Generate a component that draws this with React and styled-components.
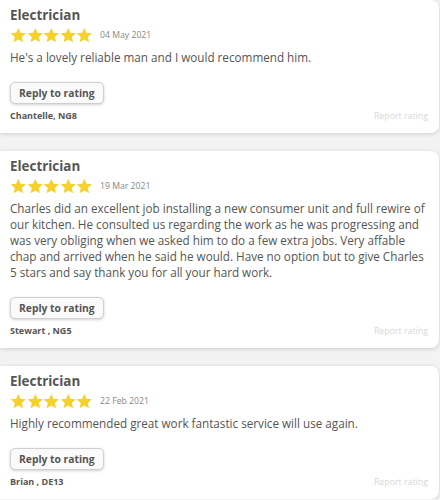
import React from 'react'
import styled, { createGlobalStyle } from 'styled-components'

const GlobalStyle = createGlobalStyle`
  body {
    margin: 0;
    background: #f3f3f3;
    font-family: "Open Sans", "Liberation Sans", sans-serif;
  }
`

const RatingList = styled.div`
  display: flex;
  flex-direction: column;
  gap: 18px;
  width: 439px;
`

const Card = styled.div`
  background: #ffffff;
  border-radius: 0 8px 8px 0;
  box-shadow: 0 1px 4px rgba(0, 0, 0, 0.16);
  padding: 7px 11px 10px 10px;
  display: flex;
  flex-direction: column;
`

const Title = styled.div`
  font-size: 13.4px;
  font-weight: 700;
  color: #555;
  line-height: 16px;
`

const StarRow = styled.div`
  display: flex;
  align-items: center;
  margin-top: 2px;
  height: 20px;
`

const Stars = styled.div`
  display: flex;
`

const DateText = styled.span`
  font-size: 8.7px;
  color: #888;
  margin-left: 7px;
`

const Body = styled.p`
  margin: 4px 0 0;
  font-size: 11.7px;
  line-height: 16px;
  color: #555;
`

const ReplyButton = styled.button`
  align-self: flex-start;
  margin-top: 17px;
  height: 22px;
  padding: 0 8px;
  font-family: inherit;
  font-size: 10.3px;
  font-weight: 700;
  color: #555;
  background: #fafafa;
  border: 1px solid #cfcfcf;
  border-radius: 5px;
  box-shadow: 0 1px 3px rgba(0, 0, 0, 0.18);
  cursor: pointer;
`

const Footer = styled.div`
  display: flex;
  justify-content: space-between;
  align-items: center;
  margin-top: 5px;
  line-height: 14px;
`

const Author = styled.span`
  font-size: 9px;
  font-weight: 700;
  color: #555;
`

const Report = styled.span`
  font-size: 8.8px;
  color: #d8d8d8;
`

const Star = () => (
  <svg width="16.6" height="17" viewBox="0 0 24 24">
    <path
      d="M12 1l3.2 7.1 7.8.8-5.9 5.2 1.7 7.7L12 17.8l-6.8 4 1.7-7.7L1 8.9l7.8-.8z"
      fill="#f5d12c"
    />
  </svg>
)

const ratings = [
  {
    date: '04 May 2021',
    text: "He's a lovely reliable man and I would recommend him.",
    author: 'Chantelle, NG8',
  },
  {
    date: '19 Mar 2021',
    text:
      'Charles did an excellent job installing a new consumer unit and full rewire of our kitchen. He consulted us regarding the work as he was progressing and was very obliging when we asked him to do a few extra jobs. Very affable chap and arrived when he said he would. Have no option but to give Charles 5 stars and say thank you for all your hard work.',
    author: 'Stewart , NG5',
  },
  {
    date: '22 Feb 2021',
    text: 'Highly recommended great work fantastic service will use again.',
    author: 'Brian , DE13',
  },
]

export default function App() {
  return (
    <>
      <GlobalStyle />
      <RatingList>
        {ratings.map(r => (
          <Card key={r.date}>
            <Title>Electrician</Title>
            <StarRow>
              <Stars>
                {[0, 1, 2, 3, 4].map(i => <Star key={i} />)}
              </Stars>
              <DateText>{r.date}</DateText>
            </StarRow>
            <Body>{r.text}</Body>
            <ReplyButton>Reply to rating</ReplyButton>
            <Footer>
              <Author>{r.author}</Author>
              <Report>Report rating</Report>
            </Footer>
          </Card>
        ))}
      </RatingList>
    </>
  )
}
